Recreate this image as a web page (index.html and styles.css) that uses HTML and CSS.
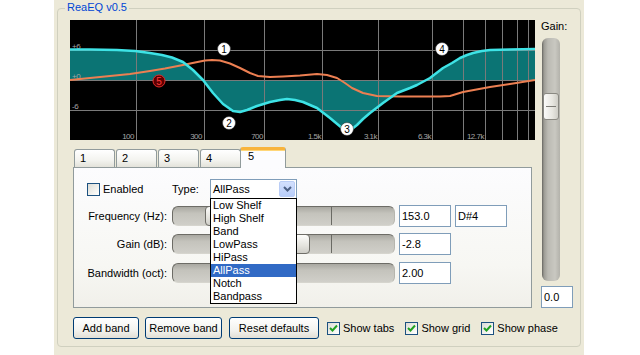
FILE: index.html
```html
<!DOCTYPE html>
<html lang="en">
<head>
    <meta charset="UTF-8">
    <meta name="viewport" content="width=device-width, initial-scale=1.0">
    <title>ReaEQ v0.5</title>
    <link rel="stylesheet" href="styles.css">
</head>
<body>
    <div class="window">
        <div class="group">
            <span class="group-title">ReaEQ v0.5</span>
            <div class="group-body">
                <div class="main-col">
                    <svg class="graph" width="465" height="120" viewBox="70 20 465 120">
                        <rect x="70" y="20" width="465" height="120" fill="#000"/>
                        <path class="fill" d="M70,80 L70,49.5 90,49.5 117,50 135,51 150,53 162,55 172,57.5 183,62 193,70 203,80 213,93 223,104 233,111 240,112 247,110 257,106 270,102 280,100 287,99 295,100 303,102 317,108 330,118 342,128 347,130 352,129 357,125 363,119 370,113 383,103 397,93 410,88 417,85 430,78 443,68 452,63 460,58 467,55 473,53 482,51 490,50 510,49.5 535,49 L535,80 Z"/>
                        <g class="grid">
                            <line x1="70" y1="50.5" x2="535" y2="50.5"/>
                            <line x1="70" y1="80.5" x2="535" y2="80.5"/>
                            <line x1="70" y1="110.5" x2="535" y2="110.5"/>
                            <line x1="136.5" y1="20" x2="136.5" y2="140"/>
                            <line x1="204.5" y1="20" x2="204.5" y2="140"/>
                            <line x1="264.5" y1="20" x2="264.5" y2="140"/>
                            <line x1="322.5" y1="20" x2="322.5" y2="140"/>
                            <line x1="378.5" y1="20" x2="378.5" y2="140"/>
                            <line x1="432.5" y1="20" x2="432.5" y2="140"/>
                            <line x1="463.5" y1="20" x2="463.5" y2="140"/>
                            <line x1="485.5" y1="20" x2="485.5" y2="140"/>
                            <line x1="502.5" y1="20" x2="502.5" y2="140"/>
                            <line x1="517.5" y1="20" x2="517.5" y2="140"/>
                            <line x1="528.5" y1="20" x2="528.5" y2="140"/>
                        </g>
                        <g class="axis">
                            <text x="72" y="49">+6</text>
                            <text x="72" y="79">+0</text>
                            <text x="72" y="109">-6</text>
                            <text x="134" y="139" text-anchor="end">100</text>
                            <text x="202" y="139" text-anchor="end">300</text>
                            <text x="263" y="139" text-anchor="end">700</text>
                            <text x="321" y="139" text-anchor="end">1.5k</text>
                            <text x="377" y="139" text-anchor="end">3.1k</text>
                            <text x="431" y="139" text-anchor="end">6.3k</text>
                            <text x="484" y="139" text-anchor="end">12.7k</text>
                        </g>
                        <polyline class="phase" points="70,80 90,78 110,76 130,74 150,71 165,68.5 183,65 195,62.5 205,60.5 212,60 220,60.5 230,63.5 240,68 250,73 258,76 270,77 283,76.5 300,75.5 317,74 327,75 337,78 345,83 352,88 363,93 377,96 400,96.5 440,96.5 450,96 463,92 490,87 510,84 535,80"/>
                        <polyline class="response" points="70,49.5 90,49.5 117,50 135,51 150,53 162,55 172,57.5 183,62 193,70 203,80 213,93 223,104 233,111 240,112 247,110 257,106 270,102 280,100 287,99 295,100 303,102 317,108 330,118 342,128 347,130 352,129 357,125 363,119 370,113 383,103 397,93 410,88 417,85 430,78 443,68 452,63 460,58 467,55 473,53 482,51 490,50 510,49.5 535,49"/>
                        <g class="node">
                            <circle cx="224" cy="49" r="6.5"/>
                            <text x="224" y="52.5">1</text>
                        </g>
                        <g class="node">
                            <circle cx="229" cy="123" r="6.5"/>
                            <text x="229" y="126.5">2</text>
                        </g>
                        <g class="node">
                            <circle cx="347" cy="129" r="6.5"/>
                            <text x="347" y="132.5">3</text>
                        </g>
                        <g class="node">
                            <circle cx="442" cy="49" r="6.5"/>
                            <text x="442" y="52.5">4</text>
                        </g>
                        <g class="node node-sel">
                            <circle cx="159" cy="81" r="6"/>
                            <text x="159" y="84.5">5</text>
                        </g>
                    </svg>

                    <div class="tabs">
                        <div class="tab">1</div>
                        <div class="tab">2</div>
                        <div class="tab">3</div>
                        <div class="tab">4</div>
                        <div class="tab active">5</div>
                    </div>
                    <div class="tab-panel">
                        <div class="row-top">
                            <label class="check enabled"><span class="box"></span>Enabled</label>
                            <span class="type-label">Type:</span>
                            <div class="combo">
                                <span class="combo-text">AllPass</span>
                                <span class="combo-btn">
                                    <svg width="9" height="6" viewBox="0 0 9 6"><polyline points="1,1 4.5,4.5 8,1" fill="none" stroke="#4d6185" stroke-width="2"/></svg>
                                </span>
                                <ul class="combo-list">
                                    <li>Low Shelf</li>
                                    <li>High Shelf</li>
                                    <li>Band</li>
                                    <li>LowPass</li>
                                    <li>HiPass</li>
                                    <li class="selected">AllPass</li>
                                    <li>Notch</li>
                                    <li>Bandpass</li>
                                </ul>
                            </div>
                        </div>
                        <div class="param">
                            <span class="param-label">Frequency (Hz):</span>
                            <div class="track"><span class="tick"></span><span class="thumb" style="left: 32px"></span></div>
                            <span class="field">153.0</span>
                            <span class="field">D#4</span>
                        </div>
                        <div class="param">
                            <span class="param-label">Gain (dB):</span>
                            <div class="track"><span class="tick"></span><span class="thumb" style="left: 117px"></span></div>
                            <span class="field">-2.8</span>
                        </div>
                        <div class="param param-last">
                            <span class="param-label">Bandwidth (oct):</span>
                            <div class="track"><span class="thumb" style="left: 60px"></span></div>
                            <span class="field">2.00</span>
                        </div>
                    </div>

                    <div class="actions">
                        <button class="btn btn-add">Add band</button>
                        <button class="btn btn-remove">Remove band</button>
                        <button class="btn btn-reset">Reset defaults</button>
                        <label class="check on"><span class="box"><svg width="11" height="11" viewBox="0 0 11 11"><polyline points="2,5 4.5,7.5 9,2.5" fill="none" stroke="#21a121" stroke-width="2"/></svg></span>Show tabs</label>
                        <label class="check on"><span class="box"><svg width="11" height="11" viewBox="0 0 11 11"><polyline points="2,5 4.5,7.5 9,2.5" fill="none" stroke="#21a121" stroke-width="2"/></svg></span>Show grid</label>
                        <label class="check on"><span class="box"><svg width="11" height="11" viewBox="0 0 11 11"><polyline points="2,5 4.5,7.5 9,2.5" fill="none" stroke="#21a121" stroke-width="2"/></svg></span>Show phase</label>
                    </div>
                </div>

                <div class="gain-col">
                    <div class="gain-label">Gain:</div>
                    <div class="vslider"><span class="vthumb"></span></div>
                    <span class="field gain-field">0.0</span>
                </div>
            </div>
        </div>
    </div>
</body>
</html>
```

FILE: styles.css
```css
body {
    margin: 0;
    background-color: white;
    font-family: "Liberation Sans", Arial, sans-serif;
    font-size: 11px;
    line-height: 13px;
    color: #000;
}
.window {
    margin-left: 54px;
    width: 530px;
    height: 355px;
    padding-top: 8px;
    box-sizing: border-box;
    background-color: #ece9d8;
    overflow: hidden;
}
.group {
    position: relative;
    margin: 0 3px;
    height: 339px;
    box-sizing: border-box;
    border: 1px solid #d0d0bf;
    border-radius: 4px;
}
.group-title {
    position: absolute;
    top: -8px;
    left: 7px;
    padding: 0 2px;
    background-color: #ece9d8;
    color: #0046d5;
}
.group-body {
    display: flex;
    padding: 11px 7px 0 12px;
}
.main-col {
    width: 465px;
    flex-shrink: 0;
}
.graph {
    display: block;
}
.fill {
    fill: #0b7474;
}
.grid line {
    stroke: #7a7a7a;
    stroke-width: 1;
}
.axis text {
    fill: #a5a5a5;
    font-size: 8px;
    letter-spacing: -0.5px;
}
.phase {
    fill: none;
    stroke: #ec7f52;
    stroke-width: 2;
    stroke-linejoin: round;
}
.response {
    fill: none;
    stroke: #3ee3e6;
    stroke-width: 2.5;
    stroke-linejoin: round;
}
.node circle {
    fill: #fff;
    stroke: #222;
    stroke-width: 0.5;
}
.node text {
    font-size: 10px;
    text-anchor: middle;
    fill: #000;
}
.node-sel circle {
    fill: #5e0000;
    stroke: #e42a2a;
    stroke-width: 1;
}
.node-sel text {
    fill: #ff3c3c;
}

/* tabs */
.tabs {
    position: relative;
    z-index: 2;
    display: flex;
    align-items: flex-end;
    height: 20px;
    margin-top: 7px;
    padding-left: 4px;
}
.tab {
    width: 41px;
    height: 18px;
    box-sizing: border-box;
    margin-right: 1px;
    padding: 2px 0 0 5px;
    border: 1px solid #919b9c;
    border-bottom: none;
    border-radius: 3px 3px 0 0;
    background: linear-gradient(#ffffff, #f3f3ef 60%, #e3e2da);
}
.tab.active {
    width: 46px;
    height: 21px;
    margin: 0 0 -1px -2px;
    padding: 0 0 0 7px;
    border-top: 3px solid #f8b43c;
    box-shadow: inset 0 1px 0 #ffd678;
    background: #fcfcfe;
}
.tab-panel {
    margin: 0 3px;
    height: 141px;
    box-sizing: border-box;
    padding: 11px 0 0 13px;
    border: 1px solid #919b9c;
    background: linear-gradient(#fcfcfe, #f7f7f3 70%, #f1f0ea);
}
.row-top {
    display: flex;
    align-items: center;
    height: 20px;
}
.check {
    display: flex;
    align-items: center;
    flex-shrink: 0;
    gap: 3px;
    white-space: nowrap;
}
.check .box {
    display: flex;
    align-items: center;
    justify-content: center;
    width: 13px;
    height: 13px;
    box-sizing: border-box;
    border: 1px solid #1c5180;
    background: linear-gradient(135deg, #dcdcd5, #f6f6f3 70%, #ffffff);
}
.enabled {
    width: 85px;
}
.type-label {
    width: 38px;
}
.combo {
    position: relative;
    display: flex;
    align-items: center;
    justify-content: space-between;
    width: 87px;
    height: 20px;
    box-sizing: border-box;
    padding: 1px;
    border: 1px solid #7f9db9;
    background-color: white;
}
.combo-text {
    padding-left: 1px;
}
.combo-btn {
    display: flex;
    align-items: center;
    justify-content: center;
    width: 16px;
    height: 16px;
    border-radius: 2px;
    border: 1px solid #bacdf6;
    box-sizing: border-box;
    background: linear-gradient(#d3e0fd, #b8cdf9);
}
.combo-list {
    position: absolute;
    z-index: 5;
    top: 18px;
    left: -1px;
    width: 87px;
    box-sizing: border-box;
    margin: 0;
    padding: 0;
    list-style: none;
    border: 1px solid #000;
    background-color: white;
}
.combo-list li {
    height: 13px;
    padding-left: 2px;
}
.combo-list li.selected {
    background-color: #316ac5;
    color: white;
}
.param {
    display: grid;
    grid-template-columns: 81px 223px 52px 52px;
    column-gap: 4px;
    align-items: center;
    margin-top: 6px;
}
.param-last {
    margin-top: 7px;
}
.param-label {
    text-align: right;
    padding-right: 1px;
}
.track {
    position: relative;
    height: 20px;
    box-sizing: border-box;
    border: 1px solid;
    border-color: #6d6c66 #b7b6ae #d6d5ce #6d6c66;
    border-radius: 6px;
    background: linear-gradient(#a9a8a1, #c4c3bc 35%, #d0cfc9);
}
.tick {
    position: absolute;
    left: 158px;
    top: 0;
    bottom: 0;
    width: 1px;
    background-color: #6a6a64;
}
.thumb {
    position: absolute;
    top: -1px;
    width: 20px;
    height: 20px;
    box-sizing: border-box;
    border: 1px solid #6f6e68;
    border-radius: 4px;
    background: linear-gradient(#fdfdfb, #e4e3dd 60%, #cfcec8);
}
.field {
    display: block;
    height: 22px;
    box-sizing: border-box;
    padding-left: 2px;
    border: 1px solid #7f9db9;
    background-color: white;
    line-height: 20px;
}

/* bottom buttons */
.actions {
    display: flex;
    align-items: center;
    margin-top: 9px;
    padding-left: 3px;
    height: 22px;
}
.btn {
    flex-shrink: 0;
    height: 22px;
    margin-right: 6px;
    padding: 0;
    border: 1px solid #003c74;
    border-radius: 3px;
    background: linear-gradient(#ffffff, #f3f3ef 60%, #e2dfd5);
    font-family: inherit;
    font-size: 11px;
    color: #000;
}
.btn-add {
    width: 66px;
}
.btn-remove {
    width: 77px;
    margin-right: 7px;
}
.btn-reset {
    width: 90px;
    margin-right: 8px;
}
.check.on {
    margin-right: 11px;
}

/* gain column */
.gain-col {
    width: 32px;
    margin-left: 6px;
    flex-shrink: 0;
}
.gain-label {
    height: 13px;
}
.vslider {
    position: relative;
    width: 18px;
    height: 243px;
    margin: 5px 0 0 1px;
    border-radius: 6px;
    background: linear-gradient(to right, #666560 0, #9d9c95 2px, #bbbab3 6px, #c9c8c1 13px, #b3b2ab 100%);
}
.vthumb {
    position: absolute;
    top: 55px;
    left: 1px;
    width: 16px;
    height: 27px;
    box-sizing: border-box;
    border: 1px solid #8a8982;
    border-radius: 3px;
    background: linear-gradient(to right, #fbfbf9, #e7e6e0 60%, #cfcec7);
}
.vthumb::after {
    content: "";
    position: absolute;
    left: 2px;
    right: 2px;
    top: 12px;
    height: 1px;
    background-color: #7d7c76;
}
.gain-field {
    margin-top: 5px;
}
```
